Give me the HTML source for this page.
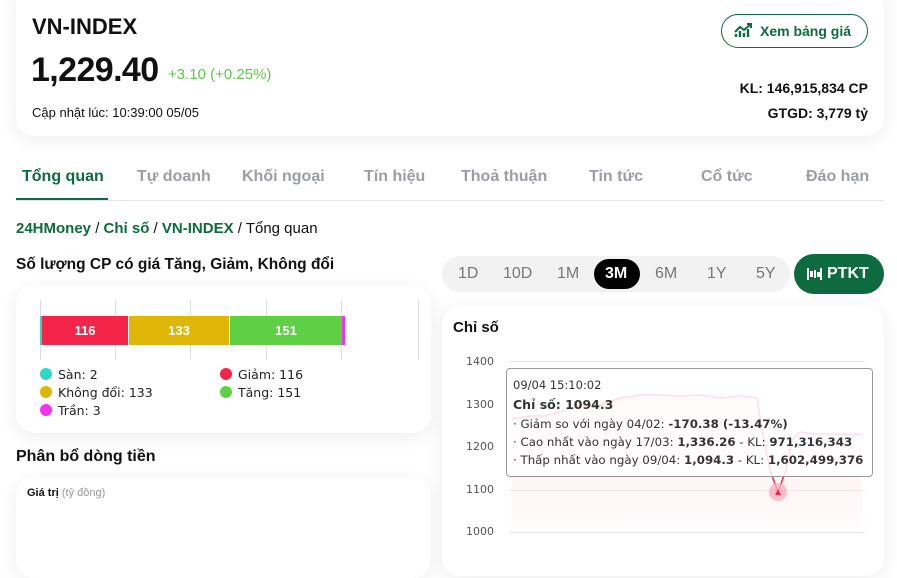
<!DOCTYPE html>
<html><head><meta charset="utf-8"><style>
*{margin:0;padding:0;box-sizing:border-box}
body{width:897px;height:556px;overflow:hidden;background:#fff;font-family:"Liberation Sans","DejaVu Sans",sans-serif;position:relative;color:#111}
.a{position:absolute}
.card{position:absolute;background:#fff;border-radius:18px;box-shadow:0 4px 18px rgba(0,0,0,.07)}
.tab{position:absolute;top:168px;font-size:16px;font-weight:bold;color:#9a9ea3}
.lg{position:absolute;font-family:"DejaVu Sans",sans-serif;font-size:12.5px;color:#222}
.dot{display:inline-block;width:12px;height:12px;border-radius:50%;vertical-align:-1px;margin-right:6px}
.yl{position:absolute;left:466px;font-family:"DejaVu Sans",sans-serif;font-size:11px;color:#555}
.gl{position:absolute;left:509px;width:356px;height:1px;background:#e4e6ea}
.rng{position:absolute;top:265px;font-size:16px;color:#777}
</style></head><body>
<div class="card" style="left:16px;top:-20px;width:868px;height:156px"></div>
<div class="a" style="left:32px;top:14px;font-size:22px;font-weight:bold">VN-INDEX</div>
<div class="a" style="left:31px;top:51px;font-size:34px;font-weight:bold;letter-spacing:-0.6px">1,229.40</div>
<div class="a" style="left:168px;top:66px;font-size:15px;color:#5cc84a">+3.10 (+0.25%)</div>
<div class="a" style="left:32px;top:105px;font-size:13px">Cập nhật lúc: 10:39:00 05/05</div>
<div class="a" style="left:721px;top:14px;width:147px;height:34px;border:1.5px solid #0d6b3f;border-radius:17px"></div>
<svg class="a" style="left:734px;top:23px" width="20" height="16" viewBox="0 0 20 16"><path d="M2 14V11M6 14V8M10 14V10M14 14V6" stroke="#0d6b3f" stroke-width="2.4"/><path d="M1 9L6 4L10 7L17 1M13 1H17V5" stroke="#0d6b3f" stroke-width="2" fill="none"/></svg>
<div class="a" style="left:760px;top:23px;font-size:14px;font-weight:bold;color:#0d6b3f">Xem bảng giá</div>
<div class="a" style="right:29px;top:80px;font-size:14px;font-weight:bold">KL: 146,915,834 CP</div>
<div class="a" style="right:29px;top:105px;font-size:14px;font-weight:bold">GTGD: 3,779 tỷ</div>

<div class="tab" style="left:22px;color:#0d6b3f">Tổng quan</div>
<div class="a" style="left:16px;top:198px;width:92px;height:3px;background:#0d6b3f"></div>
<div class="a" style="left:16px;top:200px;width:868px;height:1px;background:#e3e5e8"></div>
<div class="tab" style="left:137px">Tự doanh</div>
<div class="tab" style="left:242px">Khối ngoại</div>
<div class="tab" style="left:364px">Tín hiệu</div>
<div class="tab" style="left:461px">Thoả thuận</div>
<div class="tab" style="left:589px">Tin tức</div>
<div class="tab" style="left:701px">Cổ tức</div>
<div class="tab" style="left:806px">Đáo hạn</div>

<div class="a" style="left:16px;top:220px;font-size:15px"><b style="color:#0d6b3f">24HMoney</b> / <b style="color:#0d6b3f">Chỉ số</b> / <b style="color:#0d6b3f">VN-INDEX</b> / Tổng quan</div>
<div class="a" style="left:16px;top:256px;font-size:15.5px;font-weight:bold">Số lượng CP có giá Tăng, Giảm, Không đổi</div>

<div class="card" style="left:16px;top:286px;width:415px;height:147px"></div>
<div class="a" style="left:40px;top:300px;width:1px;height:60px;background:#ddd"></div>
<div class="a" style="left:115px;top:300px;width:1px;height:60px;background:#ddd"></div>
<div class="a" style="left:190px;top:300px;width:1px;height:60px;background:#ddd"></div>
<div class="a" style="left:266px;top:300px;width:1px;height:60px;background:#ddd"></div>
<div class="a" style="left:341px;top:300px;width:1px;height:60px;background:#ddd"></div>
<div class="a" style="left:418px;top:300px;width:1px;height:60px;background:#ddd"></div>
<div class="a" style="left:40px;top:316px;width:2px;height:29px;background:#2fd8c5"></div>
<div class="a" style="left:42px;top:316px;width:86px;height:29px;background:#f5254a;color:#fff;font-size:13px;font-weight:bold;text-align:center;line-height:29px">116</div>
<div class="a" style="left:129px;top:316px;width:100px;height:29px;background:#dfb506;color:#fff;font-size:13px;font-weight:bold;text-align:center;line-height:29px">133</div>
<div class="a" style="left:230px;top:316px;width:112px;height:29px;background:#5dd143;color:#fff;font-size:13px;font-weight:bold;text-align:center;line-height:29px">151</div>
<div class="a" style="left:342px;top:316px;width:3px;height:29px;background:#f531f0"></div>
<div class="lg" style="left:40px;top:367px"><span class="dot" style="background:#2fd8c5"></span>Sàn: 2</div>
<div class="lg" style="left:40px;top:385px"><span class="dot" style="background:#dfb506"></span>Không đổi: 133</div>
<div class="lg" style="left:40px;top:403px"><span class="dot" style="background:#f531f0"></span>Trần: 3</div>
<div class="lg" style="left:220px;top:367px"><span class="dot" style="background:#f5254a"></span>Giảm: 116</div>
<div class="lg" style="left:220px;top:385px"><span class="dot" style="background:#5dd143"></span>Tăng: 151</div>

<div class="a" style="left:16px;top:448px;font-size:16px;font-weight:bold">Phân bổ dòng tiền</div>
<div class="card" style="left:16px;top:478px;width:415px;height:100px"></div>
<div class="a" style="left:27px;top:487px;font-size:11px"><b>Giá trị</b> <span style="color:#999">(tỷ đồng)</span></div>

<div class="a" style="left:442px;top:256px;width:348px;height:36px;border-radius:18px;background:#f2f2f2"></div>
<div class="rng" style="left:458px">1D</div>
<div class="rng" style="left:503px">10D</div>
<div class="rng" style="left:557px">1M</div>
<div class="a" style="left:594px;top:259px;width:46px;height:30px;border-radius:15px;background:#000"></div>
<div class="rng" style="left:605px;color:#fff;font-weight:bold">3M</div>
<div class="rng" style="left:655px">6M</div>
<div class="rng" style="left:707px">1Y</div>
<div class="rng" style="left:756px">5Y</div>
<div class="a" style="left:794px;top:254px;width:90px;height:40px;border-radius:20px;background:#0d6b3f"></div>
<svg class="a" style="left:806px;top:267px" width="18" height="14"><path d="M2 1V13M9 3V11M15 1V13" stroke="#fff" stroke-width="2"/><rect x="4" y="4" width="3" height="6" fill="#fff"/><rect x="11" y="5" width="3" height="5" fill="#fff"/></svg>
<div class="a" style="left:827px;top:265px;font-size:16px;font-weight:bold;color:#fff">PTKT</div>

<div class="card" style="left:442px;top:306px;width:442px;height:270px"></div>
<div class="a" style="left:453px;top:319px;font-size:15px;font-weight:bold">Chỉ số</div>
<div class="yl" style="top:355px">1400</div><div class="gl" style="top:361px"></div>
<div class="yl" style="top:398px">1300</div><div class="gl" style="top:404px"></div>
<div class="yl" style="top:440px">1200</div><div class="gl" style="top:447px"></div>
<div class="yl" style="top:483px">1100</div><div class="gl" style="top:490px"></div>
<div class="yl" style="top:525px">1000</div><div class="gl" style="top:532px"></div>
<svg class="a" style="left:0;top:0" width="897" height="556">
<defs><linearGradient id="g" x1="0" y1="0" x2="0" y2="1"><stop offset="0" stop-color="#ffd6de" stop-opacity=".7"/><stop offset="1" stop-color="#fff0f3" stop-opacity=".3"/></linearGradient></defs>
<path d="M512 419L530 416L545 416L560 412L580 406L600 405L620 398L640 395L660 395L680 396L700 395L720 398L740 396L750 397L757 398L762 430L770 470L778 492L786 470L792 440L800 432L815 434L840 434L862 435L862 528L512 528Z" fill="url(#g)"/>
<path d="M512 419L530 416L545 416L560 412L580 406L600 405L620 398L640 395L660 395L680 396L700 395L720 398L740 396L750 397L757 398L762 430L770 470L778 492L786 470L792 440L800 432L815 434L840 434L862 435" fill="none" stroke="#f5254a" stroke-width="1.5"/>
<circle cx="778" cy="492" r="9" fill="#f8b0be" opacity=".8"/><path d="M775 495L778 489L781 495Z" fill="#f5254a"/>
</svg>
<div class="a" style="left:506px;top:368px;width:367px;height:109px;border:1px solid #999;border-radius:4px;background:rgba(255,255,255,.85)"></div>
<div class="a" style="left:513px;top:376px;font-family:'DejaVu Sans',sans-serif;font-size:11.5px;line-height:19px;color:#333;white-space:nowrap">
09/04 15:10:02<br><b style="font-size:12.5px">Chỉ số: 1094.3</b>
<div style="font-size:11.8px;line-height:18px">· Giảm so với ngày 04/02: <b>-170.38 (-13.47%)</b><br>· Cao nhất vào ngày 17/03: <b>1,336.26</b> - KL: <b>971,316,343</b><br>· Thấp nhất vào ngày 09/04: <b>1,094.3</b> - KL: <b>1,602,499,376</b></div></div>
</body></html>
